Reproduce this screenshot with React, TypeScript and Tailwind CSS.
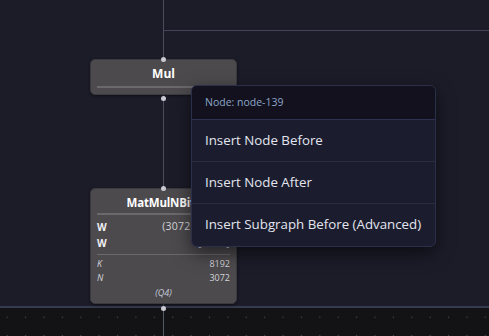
import { ReactNode } from "react";

type NodeProps = {
  top: number;
  height: number;
  children: ReactNode;
};

function Handle({ top }: { top: number }) {
  return <div className="absolute left-[161px] w-[5px] h-[5px] rounded-full bg-[#c9cad2]" style={{ top: top - 2 }} />;
}

function GraphNode({ top, height, children }: NodeProps) {
  return (
    <div
      className="absolute left-[90px] w-[147px] rounded-[5px] bg-[#4c4a4d] border border-[#3b3a40] shadow-[0_1px_3px_rgba(0,0,0,0.5)] px-[6px]"
      style={{ top, height }}
    >
      {children}
    </div>
  );
}

function Row({ label, value }: { label: string; value: string }) {
  return (
    <div className="flex items-center justify-between h-[16px] text-[10px]">
      <span className="font-bold text-[#f1f1f4]">{label}</span>
      <span className="text-[10.5px] tracking-[0.2px] text-[#d3d4da]">{value}</span>
    </div>
  );
}

function Attr({ label, value }: { label: string; value: string }) {
  return (
    <div className="flex items-center justify-between h-[13.5px] text-[9px] text-[#d3d4da]">
      <span className="italic">{label}</span>
      <span>{value}</span>
    </div>
  );
}

export default function App() {
  const items = ["Insert Node Before", "Insert Node After", "Insert Subgraph Before (Advanced)"];

  return (
    <div className="relative w-[489px] h-[336px] overflow-hidden bg-[#1b1c28] font-['Open_Sans','Noto_Sans',sans-serif]">
      {/* edges */}
      <div className="absolute left-[163px] top-0 w-px h-[306px] bg-[#4b4d5c]" />
      <div className="absolute left-[163px] top-[30px] w-[326px] h-px bg-[#43465a]" />

      {/* bottom panel */}
      <div className="absolute left-0 right-0 top-[306px] h-[2px] bg-[#363a4e]" />
      <div className="absolute left-0 right-0 top-[308px] bottom-0 bg-[#131215] bg-[radial-gradient(circle,#4a4a52_0.7px,transparent_1px)] bg-[length:18.4px_18.4px] bg-[position:-2px_0px]" />
      <div className="absolute left-[163px] top-[308px] w-px bottom-0 bg-[#55576a]" />

      <GraphNode top={59} height={36}>
        <div className="text-center text-[12px] font-bold text-white pt-[5px] leading-[18px]">Mul</div>
        <div className="h-[2px] bg-[#6b696d] mt-[3px]" />
      </GraphNode>

      <GraphNode top={188} height={116}>
        <div className="text-center text-[11.5px] font-bold text-white pt-[5px] leading-[18px] tracking-[-0.2px]">MatMulNBits</div>
        <div className="h-[2px] bg-[#6b696d] mt-[1px] mb-[4px]" />
        <Row label="W" value="(3072 x 4096)" />
        <Row label="W" value="[3072]" />
        <div className="h-px bg-[#6b696d] mt-[3px] mb-[2px]" />
        <Attr label="K" value="8192" />
        <Attr label="N" value="3072" />
        <div className="text-center text-[9px] italic text-[#c4c8d6] mt-[2px]">(Q4)</div>
      </GraphNode>

      <Handle top={59} />
      <Handle top={98} />
      <Handle top={188} />
      <Handle top={308} />

      {/* context menu */}
      <div className="absolute left-[191px] top-[85px] w-[245px] rounded-[6px] border border-[#2c2f4a] bg-[#1b1d2f] shadow-[0_6px_18px_rgba(0,0,0,0.55)] overflow-hidden">
        <div className="h-[34px] flex items-center px-[13px] bg-[#12111d] border-b border-[#2e3250] text-[10.5px] text-[#8ea6ca]">
          Node: node-139
        </div>
        {items.map((item, i) => (
          <div
            key={item}
            className={`h-[42px] flex items-center px-[13px] text-[13.3px] text-[#e3e5ee] ${i < items.length - 1 ? "border-b border-[#2a2d42]" : ""}`}
          >
            {item}
          </div>
        ))}
      </div>
    </div>
  );
}
